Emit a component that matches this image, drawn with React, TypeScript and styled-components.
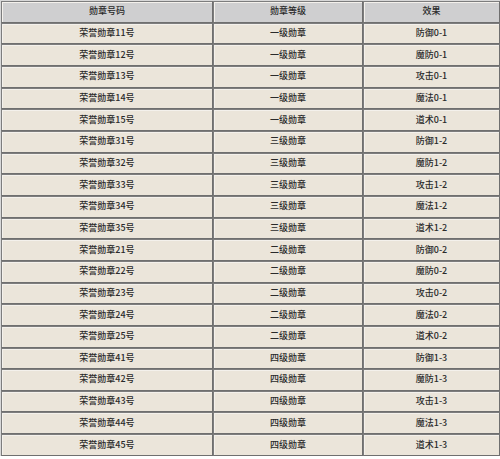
import React from "react";
import styled, { createGlobalStyle } from "styled-components";

const Global = createGlobalStyle`
  html, body { margin: 0; padding: 0; background: #ffffff; }
  body { font-family: "Noto Sans CJK SC", "Noto Sans", sans-serif; }
`;

const Table = styled.table`
  width: 500px;
  height: 456px;
  border-collapse: separate;
  border-spacing: 0;
  table-layout: fixed;
  background: #ffffff;
  border-left: 1px solid #d8d8d8;
  border-top: 1px solid #d8d8d8;
`;

const Cell = styled.td<{ $head?: boolean }>`
  height: 16px;
  padding: 0 0 2px;
  text-align: center;
  vertical-align: middle;
  font-size: 9px;
  font-weight: 500;
  line-height: 1;
  color: #2a2a2a;
  background: ${(p) => (p.$head ? "#cfcfd0" : "#ebe5da")};
  border: 1px solid #7d7d7d;
  border-right-color: #6f6f6f;
  border-bottom-color: #6f6f6f;
  box-shadow: inset 1px 1px 0 #f4f1ec;
  white-space: nowrap;
`;

const rows: [string, string, string][] = [
  ["荣誉勋章11号", "一级勋章", "防御0-1"],
  ["荣誉勋章12号", "一级勋章", "魔防0-1"],
  ["荣誉勋章13号", "一级勋章", "攻击0-1"],
  ["荣誉勋章14号", "一级勋章", "魔法0-1"],
  ["荣誉勋章15号", "一级勋章", "道术0-1"],
  ["荣誉勋章31号", "三级勋章", "防御1-2"],
  ["荣誉勋章32号", "三级勋章", "魔防1-2"],
  ["荣誉勋章33号", "三级勋章", "攻击1-2"],
  ["荣誉勋章34号", "三级勋章", "魔法1-2"],
  ["荣誉勋章35号", "三级勋章", "道术1-2"],
  ["荣誉勋章21号", "二级勋章", "防御0-2"],
  ["荣誉勋章22号", "二级勋章", "魔防0-2"],
  ["荣誉勋章23号", "二级勋章", "攻击0-2"],
  ["荣誉勋章24号", "二级勋章", "魔法0-2"],
  ["荣誉勋章25号", "二级勋章", "道术0-2"],
  ["荣誉勋章41号", "四级勋章", "防御1-3"],
  ["荣誉勋章42号", "四级勋章", "魔防1-3"],
  ["荣誉勋章43号", "四级勋章", "攻击1-3"],
  ["荣誉勋章44号", "四级勋章", "魔法1-3"],
  ["荣誉勋章45号", "四级勋章", "道术1-3"],
];

export default function App() {
  return (
    <>
      <Global />
      <Table>
        <colgroup>
          <col style={{ width: 212 }} />
          <col style={{ width: 150 }} />
          <col />
        </colgroup>
        <tbody>
          <tr>
            <Cell $head>勋章号码</Cell>
            <Cell $head>勋章等级</Cell>
            <Cell $head>效果</Cell>
          </tr>
          {rows.map((r) => (
            <tr key={r[0]}>
              <Cell>{r[0]}</Cell>
              <Cell>{r[1]}</Cell>
              <Cell>{r[2]}</Cell>
            </tr>
          ))}
        </tbody>
      </Table>
    </>
  );
}
